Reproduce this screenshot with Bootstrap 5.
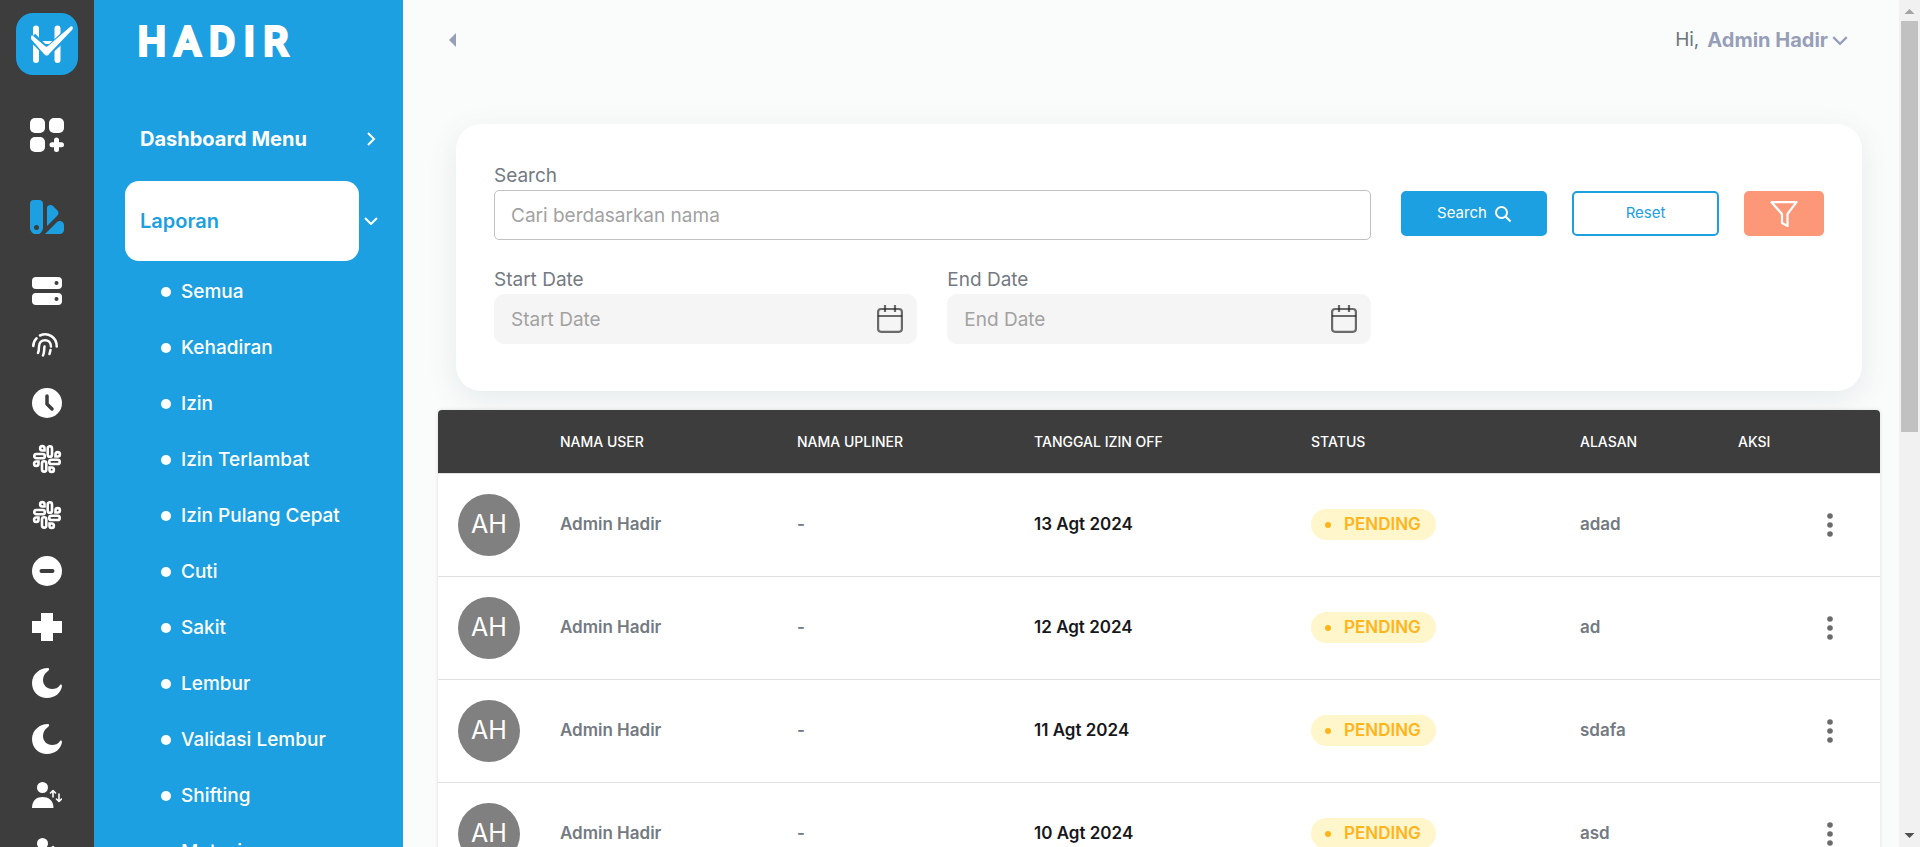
<!DOCTYPE html>
<html lang="id">
<head>
<meta charset="utf-8">
<meta name="viewport" content="width=device-width, initial-scale=1">
<title>Hadir - Laporan Izin Off</title>
<link href="https://cdn.jsdelivr.net/npm/bootstrap@5.3.0/dist/css/bootstrap.min.css" rel="stylesheet">
<style>
  :root { --brand: #1ca0e2; --ink: #3d3d3d; --muted: #747a82; --soft: #979fb8; }
  body { font-family: Inter, "Liberation Sans", sans-serif; font-size: 19px; color: var(--muted); background: #fafcfb; }
  .shell { height: 100vh; }
  .rail { width: 94px; background: var(--ink); color: #fff; padding-top: 13px; }
  .rail a { color: inherit; height: 56px; flex: none; display: flex; align-items: center; justify-content: center; }
  .rail .brand-tile { height: 62px; margin-bottom: 19px; }
  .rail .rail-main { height: 82px; }
  .rail .rail-main.active { color: var(--brand); margin-bottom: 5px; }
  .side { width: 309px; background: var(--brand); color: #fff; }
  .side a { color: #fff; text-decoration: none; }
  .wordmark { height: 98px; padding: 0 0 0 44px; gap: 9px; font: 400 39px/84px Roboto, sans-serif; -webkit-text-stroke: 4px #fff; }
  .menu-head { margin: 0 25px 0 31px; height: 82px; font-size: 20px; font-weight: 700; }
  .menu-head a { flex: 1; height: 80px; padding-left: 15px; border-radius: 14px; margin-right: 5px; }
  .menu-head.active a { background: #fff; color: var(--brand); font-weight: 600; }
  .menu-head svg { width: 14px; }
  .sub-menu { padding-top: 2px; }
  .sub-menu a { height: 56px; padding-left: 67px; gap: 10px; }
  .sub-menu a::before { content: ""; width: 10px; height: 10px; border-radius: 50%; background: #fff; }
  .topbar { height: 80px; padding: 0 51px 0 45px; }
  .topbar button { border: 0; background: none; padding: 0; color: var(--soft); }
  .topbar strong { font-size: 20px; }
  .filter-card { margin: 44px 37px 19px 53px; padding: 38px 38px 47px; border-radius: 25px; background: #fff; box-shadow: 0 8px 30px rgba(70, 90, 110, .11); }
  .filter-card .row { --bs-gutter-x: 30px; }
  .filter-card .date-row { margin-top: 26px; }
  .filter-card label { line-height: 28px; display: block; }
  .form-control { height: 50px; border-color: #c1c1c1; padding: 0 16px; border-radius: 5px; font-size: 19px; }
  .form-control::placeholder { color: #a2a2a2; }
  .date-box { position: relative; }
  .date-box .form-control { background: #f5f5f5; border-color: #f5f5f5; border-radius: 10px; }
  .date-box svg { position: absolute; right: 14px; top: 11px; }
  .actions { gap: 25px; padding-top: 29px; }
  .actions .btn { height: 45px; font-size: 15px; border: 2px solid var(--brand); border-radius: 5px; padding: 0; color: var(--brand); flex: 148 1 0; }
  .actions .btn-find { background: var(--brand); color: #fff; }
  .actions .btn-filter { background: #fc9778; border-color: #fc9778; flex: 79 1 0; }
  .table-card { margin: 0 19px 0 35px; border-radius: 4px 4px 0 0; overflow: hidden; box-shadow: 0 0 4px rgba(0, 0, 0, .12); }
  .table { table-layout: fixed; margin: 0; font-size: 17px; font-weight: 600; --bs-table-bg: #fff; }
  .table > :not(caption) > * > * { padding: 0 20px; color: var(--muted); border-color: #dee0e2; vertical-align: middle; }
  .table > thead > tr > th { background: var(--ink); color: #fff; font-size: 14px; font-weight: 500; height: 63px; }
  .table > tbody > tr > td { height: 103px; }
  .table > tbody > tr > td.date { color: #17181b; }
  .avatar { width: 62px; height: 62px; border-radius: 50%; background: #808080; color: #fff; font-size: 25px; font-weight: 400; }
  .status { height: 31px; border-radius: 16px; background: #fff6cc; color: #ffb41a; padding: 0 15px 0 14px; gap: 13px; vertical-align: middle; }
  .status::before { content: ""; width: 6px; height: 6px; border-radius: 50%; background: #ffb41a; }
  .table button { border: 0; background: none; padding: 0; display: block; margin: 0 27px 0 auto; }
  .scroll-track { width: 21px; background: #f1f1f1; }
  .scroll-thumb { width: 17px; height: 48.5%; background: #c1c1c1; }
</style>
</head>
<body>
<svg class="d-none">
  <symbol id="i-slack" viewBox="0 0 30 30"><g fill="none" stroke="currentColor" stroke-width="2.600"><rect x="15.700" y="2.300" width="4.300" height="10.500" rx="2.100"/><rect x="17.200" y="15.700" width="10.500" height="4.300" rx="2.100"/><rect x="10" y="17.200" width="4.300" height="10.500" rx="2.100"/><rect x="2.300" y="10" width="10.500" height="4.300" rx="2.100"/><path d="M12.500 6.500V4.300a2.200 2.200 0 1 0-2.200 2.200zM23.500 12.500h2.200a2.200 2.200 0 1 0-2.200-2.200zM17.500 23.500v2.200a2.200 2.200 0 1 0 2.200-2.200zM6.500 17.500H4.300a2.200 2.200 0 1 0 2.200 2.200z"/></g></symbol>
  <symbol id="i-moon" viewBox="0 0 30 30"><path fill="currentColor" d="M16 0C8 0 0 6 0 15s7 15 15 15c8 0 14-5 15-12 0-1-1-2-2-1-2 3-5 4-8 4-5 0-9-4-9-9 0-4 2-7 5-9 2-1 1-3 0-3z"/></symbol>
  <symbol id="i-user" viewBox="0 0 30 26"><g fill="currentColor"><circle cx="10.500" cy="5.500" r="5.500"/><path d="M0 26C0 18 5 15 10.500 15S21.500 18 21.500 26z"/></g><path fill="none" stroke="currentColor" stroke-width="1.600" stroke-linecap="round" stroke-linejoin="round" d="M21 15V9m-2.500 2L21 8.500l2.500 2.500M27 12v7m-2.500-2 2.500 2.500 2.500-2.500"/></symbol>
  <symbol id="i-cal" viewBox="0 0 26 28"><g fill="none" stroke="#222" stroke-opacity=".66" stroke-width="2.200"><rect x="1.100" y="4" width="23.800" height="22.800" rx="3"/><path d="M1 11h24M8 0v7M18 0v7"/></g></symbol>
  <symbol id="i-dots" viewBox="0 0 6 24"><g fill="#6b6b6b"><circle cx="3" cy="3" r="2.800"/><circle cx="3" cy="12" r="2.800"/><circle cx="3" cy="21" r="2.800"/></g></symbol>
  <symbol id="i-down" viewBox="0 0 14 8"><path fill="none" stroke="currentColor" stroke-width="2" d="M1 1l6 6 6-6"/></symbol>
</svg>
<div class="shell d-flex overflow-hidden">
  <nav class="rail d-flex flex-column flex-shrink-0 overflow-hidden" aria-label="Ikon">
    <a class="brand-tile" href="#" aria-label="Hadir"><svg width="62" height="62" viewBox="0 0 62 62"><rect width="62" height="62" rx="17" fill="#1ca0e2"/><g fill="none" stroke="#fff" stroke-linecap="round"><path stroke-width="6" d="M20 15.500V47M41.500 15.500V47"/><path stroke-width="3" stroke-linecap="butt" d="M26 29.500h10"/></g><path d="M16 24l15 15 25-23" fill="none" stroke="#1ca0e2" stroke-width="9" stroke-linejoin="round"/><path d="M15 24c0-1 1-2 2-1l12 10c1 1 2 1 3 0L54 14c2-2 4 1 2 3L33 41c-1 2-3 2-5 0L15 26z" fill="#fff"/></svg></a>
    <a class="rail-main" href="#" aria-label="Dashboard Menu"><svg width="34" height="34" viewBox="0 0 34 34" fill="currentColor"><rect width="15" height="15" rx="5"/><rect x="19" width="15" height="15" rx="5"/><rect y="19" width="15" height="15" rx="5"/><path fill="none" stroke="currentColor" stroke-width="5" stroke-linecap="round" d="M26.500 22v9.500M22 26.700h9.500"/></svg></a>
    <a class="rail-main active" href="#" aria-label="Laporan"><svg width="34" height="34" viewBox="0 0 34 34" fill="currentColor"><path fill-rule="evenodd" d="M4 0h5a4 4 0 0 1 4 4v24a6.500 6.500 0 0 1-13 0V4a4 4 0 0 1 4-4zM6.500 25a2.500 2.500 0 1 0 0 5 2.500 2.500 0 0 0 0-5z"/><path d="M17 8c0-3 4-4 6-2l4 4c2 2 2 4 0 6L17 26zM15 34l12-12c1-1 2-1 3-1 2 0 4 2 4 4v5c0 2-2 4-4 4z"/></svg></a>
    <a href="#" aria-label="Semua"><svg width="30" height="28" viewBox="0 0 30 28"><rect width="30" height="12" rx="4" fill="#fff"/><rect y="16" width="30" height="12" rx="4" fill="#fff"/><circle cx="24.500" cy="6" r="2" fill="#3d3d3d"/><circle cx="24.500" cy="22" r="2" fill="#3d3d3d"/></svg></a>
    <a class="pe-1 pb-1" href="#" aria-label="Kehadiran"><svg width="26" height="24" viewBox="0 0 26 24" fill="none" stroke="#fff" stroke-width="2.500" stroke-linecap="round"><path d="M1.300 13c0-3 1-5.500 3.200-7.600M8 2.500C16 -1 24.700 4 24.700 13.500"/><path d="M6 20c1-2 1-4 1-6.500C7 5 19 5 19 13.500M11 22.500c1.500-3 1-5.500 1.500-9M18.500 17l-1 4"/></svg></a>
    <a href="#" aria-label="Izin"><svg width="30" height="30" viewBox="0 0 30 30"><circle cx="15" cy="15" r="15" fill="#fff"/><path d="M15 8v8l5 5" fill="none" stroke="#3d3d3d" stroke-width="3.500" stroke-linecap="round" stroke-linejoin="round"/></svg></a>
    <a href="#" aria-label="Izin Terlambat"><svg width="30" height="30"><use href="#i-slack"/></svg></a>
    <a href="#" aria-label="Izin Pulang Cepat"><svg width="30" height="30"><use href="#i-slack"/></svg></a>
    <a href="#" aria-label="Cuti"><svg width="30" height="30" viewBox="0 0 30 30"><circle cx="15" cy="15" r="15" fill="#fff"/><path d="M9.500 15h11" stroke="#3d3d3d" stroke-width="4" stroke-linecap="round"/></svg></a>
    <a href="#" aria-label="Sakit"><svg width="30" height="28" viewBox="0 0 30 28"><path d="M9 0h12v8h9v12h-9v8H9v-8H0V8h9z" fill="#fff"/></svg></a>
    <a href="#" aria-label="Lembur"><svg width="30" height="30"><use href="#i-moon"/></svg></a>
    <a href="#" aria-label="Validasi Lembur"><svg width="30" height="30"><use href="#i-moon"/></svg></a>
    <a href="#" aria-label="Shifting"><svg width="30" height="26"><use href="#i-user"/></svg></a>
    <a href="#" aria-label="Mutasi"><svg width="30" height="26"><use href="#i-user"/></svg></a>
  </nav>

  <nav class="side flex-shrink-0 overflow-hidden" aria-label="Menu utama">
    <div class="wordmark d-flex" role="img" aria-label="HADIR"><span>H</span><span>A</span><span>D</span><span>I</span><span>R</span></div>
    <div class="menu-head d-flex align-items-center"><a class="d-flex align-items-center" href="#">Dashboard Menu</a><svg height="14" viewBox="0 0 14 14"><path d="M4 1l6 6-6 6" fill="none" stroke="#fff" stroke-width="2"/></svg></div>
    <div class="menu-head active d-flex align-items-center"><a class="d-flex align-items-center" href="#">Laporan</a><svg height="8"><use href="#i-down"/></svg></div>
    <div class="sub-menu fw-medium">
      <a class="d-flex align-items-center" href="#">Semua</a>
      <a class="d-flex align-items-center" href="#">Kehadiran</a>
      <a class="d-flex align-items-center" href="#">Izin</a>
      <a class="d-flex align-items-center" href="#">Izin Terlambat</a>
      <a class="d-flex align-items-center" href="#">Izin Pulang Cepat</a>
      <a class="d-flex align-items-center" href="#">Cuti</a>
      <a class="d-flex align-items-center" href="#">Sakit</a>
      <a class="d-flex align-items-center" href="#">Lembur</a>
      <a class="d-flex align-items-center" href="#">Validasi Lembur</a>
      <a class="d-flex align-items-center" href="#">Shifting</a>
      <a class="d-flex align-items-center" href="#">Mutasi</a>
    </div>
  </nav>

  <main class="flex-grow-1 overflow-hidden">
    <header class="topbar d-flex align-items-center justify-content-between">
      <button type="button" aria-label="Tutup menu"><svg class="d-block" width="8" height="14" viewBox="0 0 8 14"><path d="M8 0v14L1 7z" fill="currentColor"/></svg></button>
      <button class="d-flex align-items-center" type="button"><span class="me-2 text-secondary">Hi,</span><strong class="me-1">Admin Hadir</strong><svg width="16" height="9"><use href="#i-down"/></svg></button>
    </header>
    <form class="filter-card">
      <div class="row">
        <div class="col-8">
          <label for="q">Search</label>
          <input class="form-control" id="q" type="text" placeholder="Cari berdasarkan nama">
          <div class="row date-row">
            <div class="col-6"><label for="start">Start Date</label><div class="date-box"><input class="form-control" id="start" type="text" placeholder="Start Date"><svg width="26" height="28"><use href="#i-cal"/></svg></div></div>
            <div class="col-6"><label for="end">End Date</label><div class="date-box"><input class="form-control" id="end" type="text" placeholder="End Date"><svg width="26" height="28"><use href="#i-cal"/></svg></div></div>
          </div>
        </div>
        <div class="col-4">
          <div class="actions d-flex">
            <button class="btn btn-find d-flex align-items-center justify-content-center gap-2" type="button">Search <svg width="16" height="16" viewBox="0 0 16 16" fill="none" stroke="#fff" stroke-width="2"><circle cx="6.500" cy="6.500" r="5.500"/><path d="M10.500 10.500l5 5"/></svg></button>
            <button class="btn" type="button">Reset</button>
            <button class="btn btn-filter" type="button" aria-label="Filter"><svg class="d-block mx-auto" width="28" height="26" viewBox="0 0 28 26"><path d="M1.500 1.200h25L17.500 13v12l-5.500-3v-9z" fill="none" stroke="#fff" stroke-width="2.200" stroke-linejoin="round"/></svg></button>
          </div>
        </div>
      </div>
    </form>
    <div class="table-card">
      <table class="table">
        <colgroup><col style="width:7.070%"><col style="width:16.440%"><col style="width:16.440%"><col style="width:19.210%"><col style="width:18.650%"><col style="width:10.960%"><col style="width:11.230%"></colgroup>
        <thead><tr><th></th><th>NAMA USER</th><th>NAMA UPLINER</th><th>TANGGAL IZIN OFF</th><th>STATUS</th><th>ALASAN</th><th>AKSI</th></tr></thead>
        <tbody>
          <tr><td><span class="avatar d-flex align-items-center justify-content-center">AH</span></td><td>Admin Hadir</td><td>-</td><td class="date">13 Agt 2024</td><td><span class="status d-inline-flex align-items-center">PENDING</span></td><td>adad</td><td><button type="button" aria-label="Aksi"><svg class="d-block" width="6" height="24"><use href="#i-dots"/></svg></button></td></tr>
          <tr><td><span class="avatar d-flex align-items-center justify-content-center">AH</span></td><td>Admin Hadir</td><td>-</td><td class="date">12 Agt 2024</td><td><span class="status d-inline-flex align-items-center">PENDING</span></td><td>ad</td><td><button type="button" aria-label="Aksi"><svg class="d-block" width="6" height="24"><use href="#i-dots"/></svg></button></td></tr>
          <tr><td><span class="avatar d-flex align-items-center justify-content-center">AH</span></td><td>Admin Hadir</td><td>-</td><td class="date">11 Agt 2024</td><td><span class="status d-inline-flex align-items-center">PENDING</span></td><td>sdafa</td><td><button type="button" aria-label="Aksi"><svg class="d-block" width="6" height="24"><use href="#i-dots"/></svg></button></td></tr>
          <tr><td><span class="avatar d-flex align-items-center justify-content-center">AH</span></td><td>Admin Hadir</td><td>-</td><td class="date">10 Agt 2024</td><td><span class="status d-inline-flex align-items-center">PENDING</span></td><td>asd</td><td><button type="button" aria-label="Aksi"><svg class="d-block" width="6" height="24"><use href="#i-dots"/></svg></button></td></tr>
        </tbody>
      </table>
    </div>
  </main>

  <div class="scroll-track d-flex flex-column align-items-center flex-shrink-0" aria-hidden="true">
    <svg class="flex-shrink-0" width="21" height="21" viewBox="0 0 21 21"><path d="M5.500 14h10L10.500 9z" fill="#a3a3a3"/></svg>
    <div class="scroll-thumb"></div>
    <svg class="flex-shrink-0 mt-auto" width="21" height="21" viewBox="0 0 21 21"><path d="M5.500 7h10l-5 5z" fill="#505050"/></svg>
  </div>
</div>
<script src="https://cdn.jsdelivr.net/npm/bootstrap@5.3.0/dist/js/bootstrap.bundle.min.js"></script>
</body>
</html>
